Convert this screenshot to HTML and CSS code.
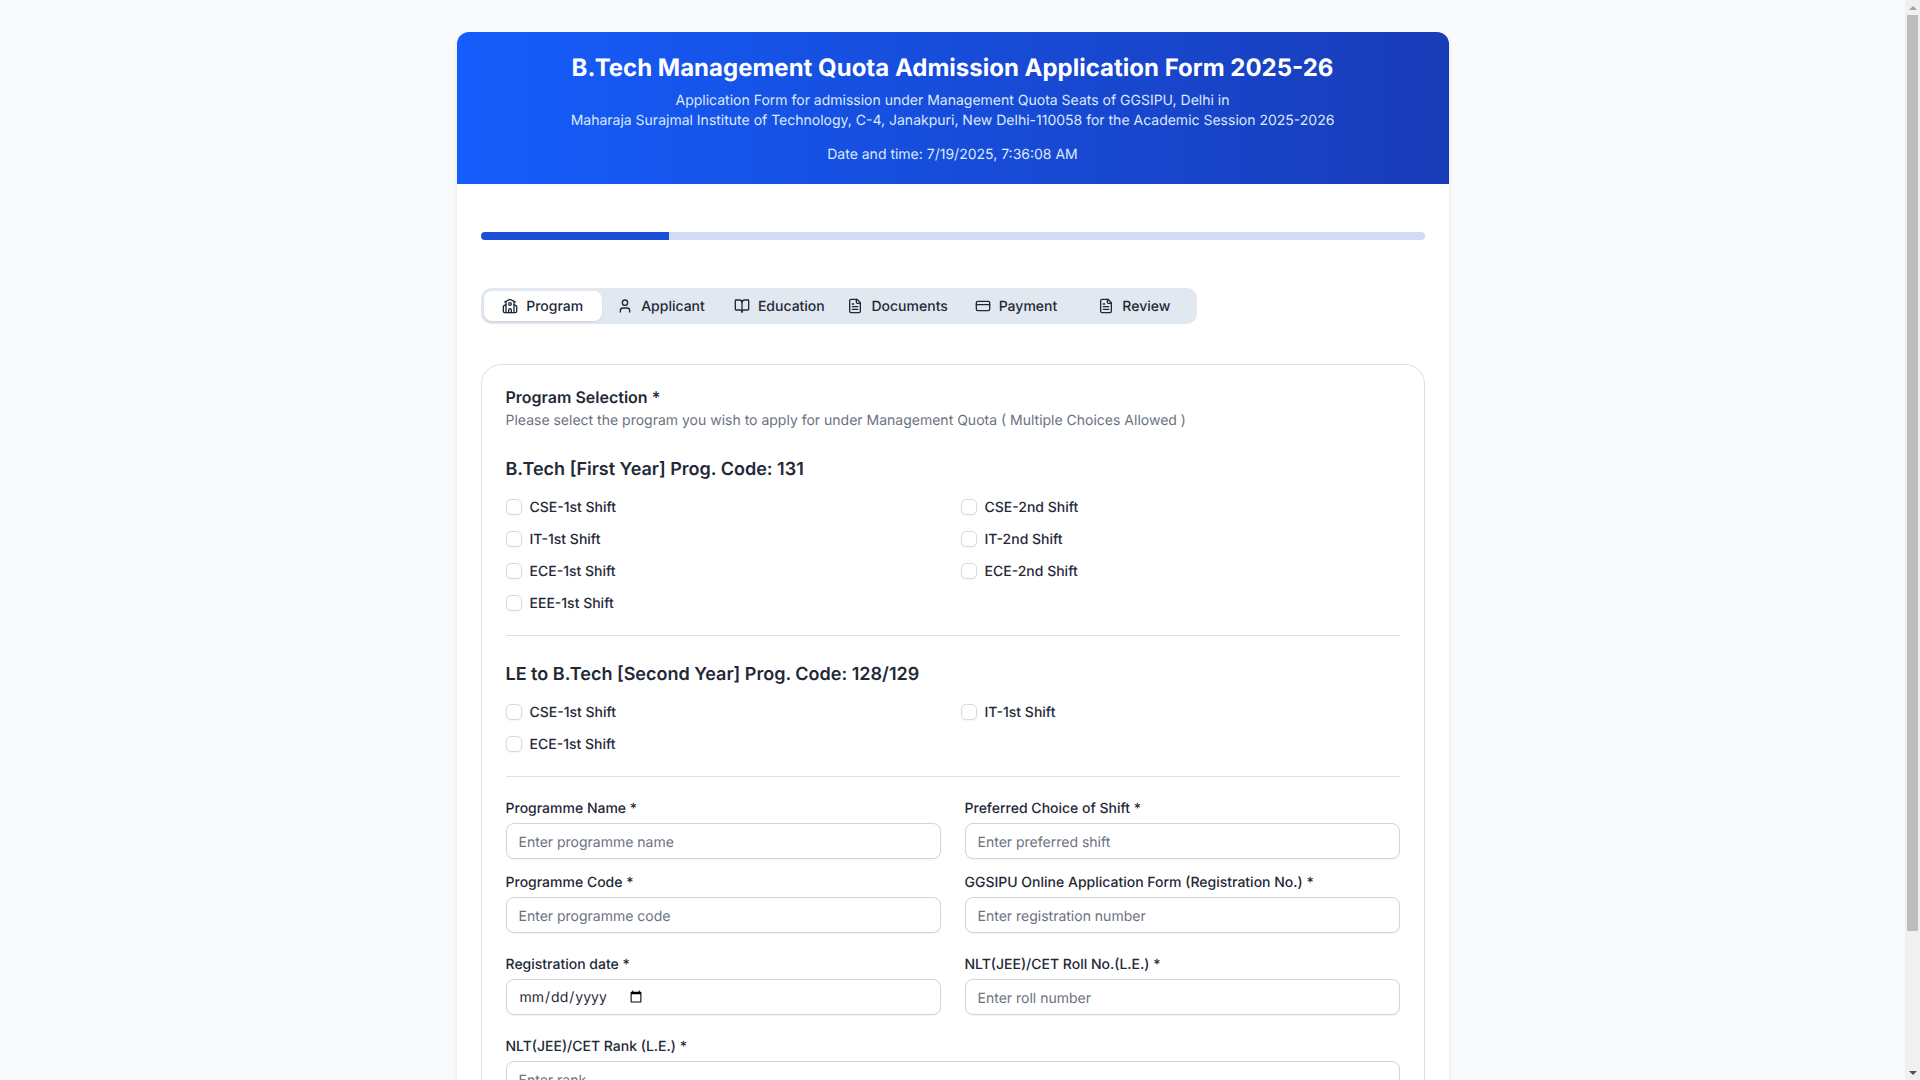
FILE: index.html
```html
<!DOCTYPE html>
<html lang="en">

<head>
    <meta charset="UTF-8">
    <meta name="viewport" content="width=device-width, initial-scale=1.0">
    <title>B.Tech Management Quota Admission Application Form 2025-26</title>
    <link rel="stylesheet" href="styles.css">
</head>

<body>
    <div class="page">
        <div class="formCard">
            <header class="formHeader">
                <h1>B.Tech Management Quota Admission Application Form 2025-26</h1>
                <p>Application Form for admission under Management Quota Seats of GGSIPU, Delhi in<br>
                    Maharaja Surajmal Institute of Technology, C-4, Janakpuri, New Delhi-110058 for the Academic Session 2025-2026</p>
                <p class="dateLine">Date and time: 7/19/2025, 7:36:08 AM</p>
            </header>

            <div class="formBody">
                <div class="progress">
                    <div class="progressFill"></div>
                </div>

                <div class="tabs">
                    <button type="button" class="tab active">
                        <svg class="icon" viewBox="0 0 24 24"><path d="M14 22v-4a2 2 0 1 0-4 0v4"/><path d="m18 10 3.447 1.724a1 1 0 0 1 .553.894V20a2 2 0 0 1-2 2H4a2 2 0 0 1-2-2v-7.382a1 1 0 0 1 .553-.894L6 10"/><path d="M18 5v17"/><path d="m4 6 7.106-3.553a2 2 0 0 1 1.788 0L20 6"/><path d="M6 5v17"/><circle cx="12" cy="9" r="2"/></svg>
                        Program
                    </button>
                    <button type="button" class="tab">
                        <svg class="icon" viewBox="0 0 24 24"><path d="M19 21v-2a4 4 0 0 0-4-4H9a4 4 0 0 0-4 4v2"/><circle cx="12" cy="7" r="4"/></svg>
                        Applicant
                    </button>
                    <button type="button" class="tab">
                        <svg class="icon" viewBox="0 0 24 24"><path d="M12 7v14"/><path d="M3 18a1 1 0 0 1-1-1V4a1 1 0 0 1 1-1h5a4 4 0 0 1 4 4 4 4 0 0 1 4-4h5a1 1 0 0 1 1 1v13a1 1 0 0 1-1 1h-6a3 3 0 0 0-3 3 3 3 0 0 0-3-3z"/></svg>
                        Education
                    </button>
                    <button type="button" class="tab">
                        <svg class="icon" viewBox="0 0 24 24"><path d="M15 2H6a2 2 0 0 0-2 2v16a2 2 0 0 0 2 2h12a2 2 0 0 0 2-2V7Z"/><path d="M14 2v4a2 2 0 0 0 2 2h4"/><path d="M10 9H8"/><path d="M16 13H8"/><path d="M16 17H8"/></svg>
                        Documents
                    </button>
                    <button type="button" class="tab">
                        <svg class="icon" viewBox="0 0 24 24"><rect width="20" height="14" x="2" y="5" rx="2"/><line x1="2" x2="22" y1="10" y2="10"/></svg>
                        Payment
                    </button>
                    <button type="button" class="tab">
                        <svg class="icon" viewBox="0 0 24 24"><path d="M15 2H6a2 2 0 0 0-2 2v16a2 2 0 0 0 2 2h12a2 2 0 0 0 2-2V7Z"/><path d="M14 2v4a2 2 0 0 0 2 2h4"/><path d="M10 9H8"/><path d="M16 13H8"/><path d="M16 17H8"/></svg>
                        Review
                    </button>
                </div>

                <section class="panel">
                    <h2 class="panelTitle">Program Selection *</h2>
                    <p class="panelHint">Please select the program you wish to apply for under Management Quota ( Multiple Choices Allowed )</p>

                    <h3 class="groupTitle">B.Tech [First Year] Prog. Code: 131</h3>
                    <div class="checkGrid">
                        <label class="check"><input type="checkbox"><span>CSE-1st Shift</span></label>
                        <label class="check"><input type="checkbox"><span>CSE-2nd Shift</span></label>
                        <label class="check"><input type="checkbox"><span>IT-1st Shift</span></label>
                        <label class="check"><input type="checkbox"><span>IT-2nd Shift</span></label>
                        <label class="check"><input type="checkbox"><span>ECE-1st Shift</span></label>
                        <label class="check"><input type="checkbox"><span>ECE-2nd Shift</span></label>
                        <label class="check"><input type="checkbox"><span>EEE-1st Shift</span></label>
                    </div>

                    <hr class="divider">

                    <h3 class="groupTitle">LE to B.Tech [Second Year] Prog. Code: 128/129</h3>
                    <div class="checkGrid">
                        <label class="check"><input type="checkbox"><span>CSE-1st Shift</span></label>
                        <label class="check"><input type="checkbox"><span>IT-1st Shift</span></label>
                        <label class="check"><input type="checkbox"><span>ECE-1st Shift</span></label>
                    </div>

                    <hr class="divider">

                    <div class="fieldGrid tight">
                        <div class="field">
                            <label>Programme Name *</label>
                            <input type="text" placeholder="Enter programme name">
                        </div>
                        <div class="field">
                            <label>Preferred Choice of Shift *</label>
                            <input type="text" placeholder="Enter preferred shift">
                        </div>
                        <div class="field">
                            <label>Programme Code *</label>
                            <input type="text" placeholder="Enter programme code">
                        </div>
                        <div class="field">
                            <label>GGSIPU Online Application Form (Registration No.) *</label>
                            <input type="text" placeholder="Enter registration number">
                        </div>
                    </div>

                    <div class="fieldGrid">
                        <div class="field">
                            <label>Registration date *</label>
                            <input type="date">
                        </div>
                        <div class="field">
                            <label>NLT(JEE)/CET Roll No.(L.E.) *</label>
                            <input type="text" placeholder="Enter roll number">
                        </div>
                    </div>

                    <div class="field single">
                        <label>NLT(JEE)/CET Rank (L.E.) *</label>
                        <input type="text" placeholder="Enter rank">
                    </div>
                </section>

                <div class="formNav">
                    <button type="button" class="navBtn">Previous</button>
                    <button type="button" class="navBtn primary">Next</button>
                </div>
            </div>
        </div>
    </div>

    <div class="scrollStrip">
        <span class="scrollBtn"><span class="arrowUp"></span></span>
        <span class="scrollThumb"></span>
        <span class="scrollBtn"><span class="arrowDown"></span></span>
    </div>
</body>

</html>
```

FILE: styles.css
```css
*,
*::after,
*::before {
    box-sizing: border-box;
}

body {
    margin: 0;
    padding-right: 15px;
    background-color: #f9fafb;
    color: #1f2937;
    font-family: Inter, 'Noto Sans', sans-serif;
    font-size: 14px;
    text-rendering: geometricPrecision;
}

.scrollStrip {
    position: fixed;
    top: 0;
    right: 0;
    bottom: 0;
    width: 15px;
    display: flex;
    flex-direction: column;
    align-items: center;
    justify-content: space-between;
    background-color: #f0f0f0;
}

.scrollBtn {
    display: flex;
    align-items: center;
    justify-content: center;
    height: 15px;
}

.scrollThumb {
    width: 11px;
    height: 916px;
    margin-bottom: auto;
    background-color: #bdbdbd;
}

.arrowUp,
.arrowDown {
    width: 0;
    height: 0;
    border-left: 4px solid transparent;
    border-right: 4px solid transparent;
}

.arrowUp {
    border-bottom: 4px solid #a3a3a3;
}

.arrowDown {
    border-top: 4px solid #505050;
}

.page {
    max-width: 1024px;
    margin: 0 auto;
    padding: 32px 16px;
}

.formCard {
    background-color: #ffffff;
    border-radius: 12px;
    box-shadow: 0 4px 6px -1px rgba(0, 0, 0, 0.1), 0 2px 4px -2px rgba(0, 0, 0, 0.1);
    overflow: hidden;
}

.formHeader {
    padding: 20px 24px 19px;
    text-align: center;
    color: #ffffff;
    background-image: linear-gradient(to right, #155dfc, #193cb8);
}

.formHeader h1 {
    margin: 0 0 7px;
    font-size: 24px;
    line-height: 32px;
    font-weight: 700;
}

.formHeader p {
    margin: 0;
    font-size: 14px;
    line-height: 20px;
    color: #dbeafe;
}

.formHeader .dateLine {
    margin-top: 14px;
}

.formBody {
    padding: 48px 24px 24px;
}

.progress {
    height: 8px;
    border-radius: 999px;
    background-color: #d1daf6;
    overflow: hidden;
}

.progressFill {
    width: 20%;
    height: 100%;
    background-color: #1d4ed8;
}

.tabs {
    display: flex;
    width: 716px;
    height: 36px;
    margin-top: 48px;
    padding: 3px;
    border-radius: 10px;
    background-color: #e2e8f0;
}

.tab {
    flex: 1;
    display: flex;
    align-items: center;
    justify-content: center;
    gap: 8px;
    height: 30px;
    padding: 4px 8px;
    border: 0;
    border-radius: 8px;
    background: transparent;
    color: #1f2937;
    font-family: inherit;
    font-size: 14px;
    font-weight: 500;
    text-rendering: geometricPrecision;
}

.tab.active {
    background-color: #ffffff;
    box-shadow: 0 1px 2px rgba(0, 0, 0, 0.1);
}

.icon {
    width: 16px;
    height: 16px;
    flex-shrink: 0;
    fill: none;
    stroke: currentColor;
    stroke-width: 2;
    stroke-linecap: round;
    stroke-linejoin: round;
}

.panel {
    margin-top: 40px;
    padding: 24px;
    border: 1px solid #d9dee7;
    border-radius: 20px;
}

.panelTitle {
    margin: 0;
    font-size: 16px;
    line-height: 16px;
    font-weight: 600;
}

.panelHint {
    margin: 6px 0 0;
    font-size: 14px;
    line-height: 20px;
    color: #6b7280;
}

.groupTitle {
    margin: 25px 0 15px;
    font-size: 18px;
    line-height: 28px;
    font-weight: 600;
}

.checkGrid {
    display: grid;
    grid-template-columns: 1fr 1fr;
    gap: 16px;
}

.check {
    display: flex;
    align-items: center;
    gap: 8px;
    font-size: 14px;
    line-height: 16px;
    font-weight: 500;
}

.check span {
    display: block;
    height: 16px;
    padding-top: 1px;
}

.check input {
    appearance: none;
    width: 16px;
    height: 16px;
    margin: 0;
    border: 1px solid #d6dae2;
    border-radius: 5px;
    background-color: #ffffff;
    box-shadow: 0 1px 2px rgba(0, 0, 0, 0.05);
}

.divider {
    margin: 24px 0;
    border: 0;
    border-top: 1px solid #d9dee7;
}

.fieldGrid {
    display: grid;
    grid-template-columns: 1fr 1fr;
    gap: 24px;
    margin-bottom: 24px;
}

.fieldGrid.tight {
    gap: 16px 24px;
}

.field label {
    display: block;
    margin-bottom: 7px;
    padding-top: 1px;
    font-size: 14px;
    line-height: 14px;
    font-weight: 500;
}

.field input {
    display: flex;
    width: 100%;
    height: 36px;
    padding: 4px 12px;
    border: 1px solid #d1d5db;
    border-radius: 8px;
    background-color: #ffffff;
    box-shadow: 0 1px 2px rgba(0, 0, 0, 0.05);
    color: #1f2937;
    font-family: inherit;
    font-size: 14px;
    text-rendering: geometricPrecision;
}

.field input[type="text"] {
    padding-top: 5px;
    padding-bottom: 3px;
}

.field input::placeholder {
    color: #6b7280;
}

.formNav {
    display: flex;
    justify-content: space-between;
    margin-top: 24px;
}

.navBtn {
    height: 36px;
    padding: 8px 16px;
    border: 1px solid #d1d5db;
    border-radius: 8px;
    background-color: #ffffff;
    color: #1f2937;
    font-family: inherit;
    font-size: 14px;
    font-weight: 500;
}

.navBtn.primary {
    border-color: #1d4ed8;
    background-color: #1d4ed8;
    color: #ffffff;
}
```
